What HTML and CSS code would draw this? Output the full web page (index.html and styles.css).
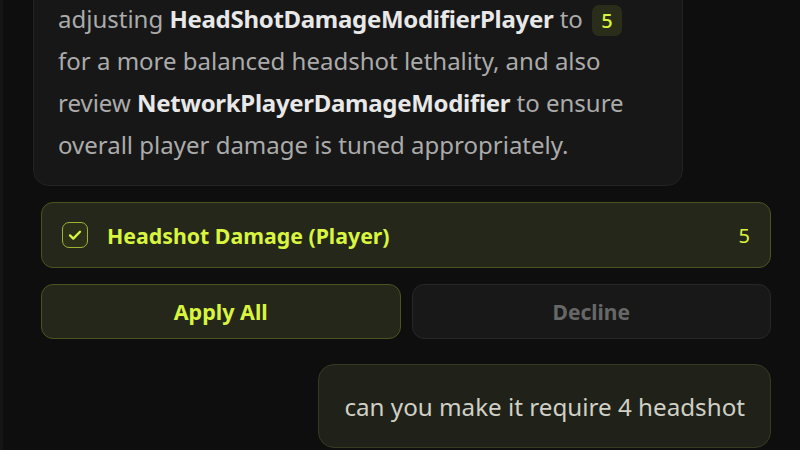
FILE: index.html
```html
<!DOCTYPE html>
<html lang="en">
<head>
    <meta charset="UTF-8">
    <title>Chat</title>
    <link rel="stylesheet" href="styles.css">
</head>
<body>
    <div id="chat">
        <!-- assistant reply -->
        <div class="msg-bot">
            <p>adjusting <b>HeadShotDamageModifierPlayer</b> to <span class="chip">5</span><br>
            for a more balanced headshot lethality, and also<br>
            review <b>NetworkPlayerDamageModifier</b> to ensure<br>
            overall player damage is tuned appropriately.</p>
        </div>

        <!-- proposed change -->
        <div class="actions">
            <div class="change">
                <span class="check">
                    <svg width="18" height="18" viewBox="0 0 18 18"><path d="M4 9.4l3.3 3.2L14 5.8" fill="none" stroke="#d8f53f" stroke-width="2.3" stroke-linecap="round" stroke-linejoin="round"/></svg>
                </span>
                <span class="change-name">Headshot Damage (Player)</span>
                <span class="change-val">5</span>
            </div>
            <div class="buttons">
                <button class="btn btn-apply">Apply All</button>
                <button class="btn btn-decline">Decline</button>
            </div>
        </div>

        <!-- user message -->
        <div class="msg-user">can you make it require 4 headshot</div>
    </div>
</body>
</html>
```

FILE: styles.css
```css
html, body {
    margin: 0;
    padding: 0;
    height: 100%;
}

body {
    background: #0e0e0e;
    border-left: 3px solid #151515;
    box-sizing: border-box;
    font-family: "Noto Sans", "Open Sans", sans-serif;
    overflow: hidden;
}

#chat {
    height: 100%;
    display: flex;
    flex-direction: column;
    justify-content: flex-end;
    padding: 0 29px 2px 30px;
    box-sizing: border-box;
}

#chat > * {
    flex-shrink: 0;
}

.msg-bot {
    width: 650px;
    box-sizing: border-box;
    background: #171717;
    border: 1px solid #222;
    border-radius: 16px;
    padding: 20px 24px 19px;
}

.msg-bot p {
    margin: 0;
    font-size: 24px;
    line-height: 42px;
    color: #ababab;
    white-space: nowrap;
}

.msg-bot b {
    color: #e8e8e8;
    font-weight: 700;
    letter-spacing: -0.3px;
}

.chip {
    display: inline-block;
    background: #2a2d19;
    color: #d8f53f;
    border-radius: 7px;
    width: 30px;
    margin-left: 3px;
    text-align: center;
    line-height: 31px;
    font-size: 20px;
    font-weight: 500;
}

.actions {
    margin: 16px 0 0 8px;
}

.change {
    display: flex;
    align-items: center;
    height: 66px;
    box-sizing: border-box;
    background: #25271a;
    border: 1px solid #4d531f;
    border-radius: 12px;
    padding: 0 20px 0 20px;
}

.check {
    width: 26px;
    height: 26px;
    box-sizing: border-box;
    background: #2d3019;
    border: 1.5px solid #9db236;
    border-radius: 7px;
    display: flex;
    align-items: center;
    justify-content: center;
    margin-right: 19px;
}

.change-name {
    flex: 1;
    color: #d8f53f;
    font-weight: 700;
    font-size: 21.3px;
}

.change-val {
    color: #d8f53f;
    font-size: 20px;
}

.buttons {
    display: flex;
    gap: 11px;
    margin-top: 16px;
}

.btn {
    flex: 1;
    height: 55px;
    border-radius: 12px;
    font-family: inherit;
    font-weight: 700;
    font-size: 21.5px;
    cursor: pointer;
}

.btn-apply {
    background: #25271a;
    border: 1px solid #4d531f;
    color: #d8f53f;
}

.btn-decline {
    background: #181818;
    border: 1px solid #272727;
    color: #676767;
    font-size: 21px;
}

.msg-user {
    align-self: flex-end;
    margin-top: 25px;
    background: #20221a;
    border: 1px solid #363a22;
    border-radius: 16px;
    padding: 0 25px;
    height: 84px;
    box-sizing: border-box;
    display: flex;
    align-items: center;
    color: #d0d0c6;
    font-size: 24.2px;
}
```
